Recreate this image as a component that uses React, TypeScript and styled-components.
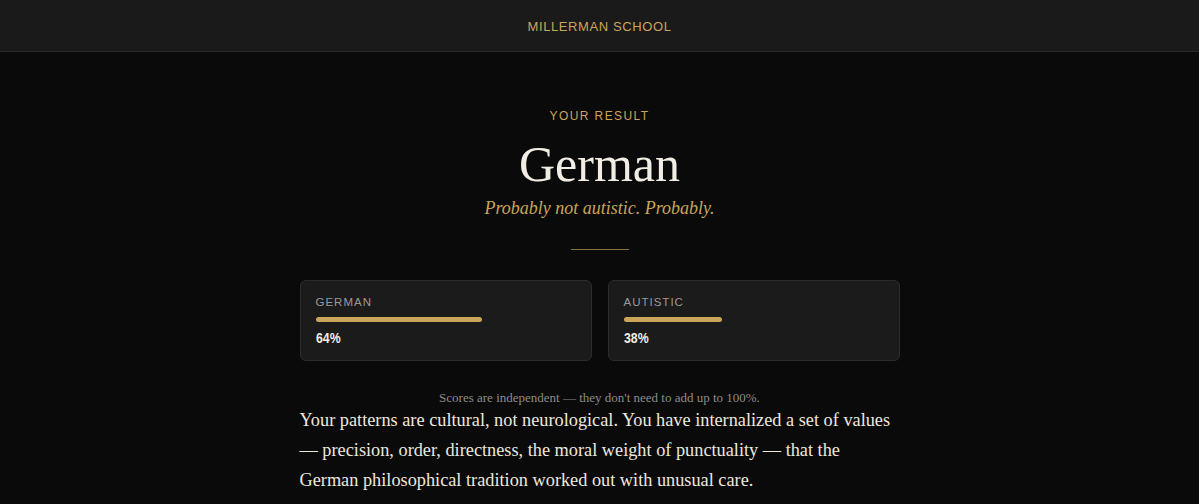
import React from 'react';
import styled, { createGlobalStyle } from 'styled-components';

const GlobalStyle = createGlobalStyle`
  html, body {
    margin: 0;
    padding: 0;
    background: #0a0a0a;
  }
  * {
    box-sizing: border-box;
  }
`;

const gold = '#c9a55a';
const serif = `'Liberation Serif', 'Times New Roman', serif`;
const sans = `'Liberation Sans', Arial, sans-serif`;

type Score = {
  label: string;
  value: number;
};

const scores: Score[] = [
  { label: 'German', value: 64 },
  { label: 'Autistic', value: 38 },
];

const Page = styled.div`
  min-height: 100vh;
  background: #0a0a0a;
  color: #ece8df;
`;

const Header = styled.header`
  height: 52px;
  padding-top: 1px;
  display: flex;
  align-items: center;
  justify-content: center;
  background: #1a1a1a;
  border-bottom: 1px solid #2a2a2a;
`;

const Brand = styled.span`
  font-family: ${sans};
  font-size: 13px;
  letter-spacing: 0.6px;
  color: ${gold};
`;

const Main = styled.main`
  width: 600px;
  margin: 0 auto;
  padding-top: 57px;
  display: flex;
  flex-direction: column;
  align-items: center;
`;

const Eyebrow = styled.div`
  font-family: ${sans};
  font-size: 12px;
  letter-spacing: 1.4px;
  color: ${gold};
  line-height: 14px;
`;

const Title = styled.h1`
  margin: 12px 0 0;
  font-family: ${serif};
  font-weight: 400;
  font-size: 50px;
  line-height: 58px;
  color: #f1ede4;
`;

const Tagline = styled.p`
  margin: 3px 0 0;
  font-family: ${serif};
  font-style: italic;
  font-size: 18px;
  line-height: 24px;
  color: ${gold};
`;

const Divider = styled.hr`
  width: 58px;
  margin: 29px 0 0;
  border: none;
  border-top: 1px solid #8a7240;
`;

const Grid = styled.div`
  width: 100%;
  margin-top: 30px;
  display: grid;
  grid-template-columns: 1fr 1fr;
  gap: 16px;
`;

const Card = styled.div`
  height: 81px;
  padding: 14px 15px 0;
  background: #1b1b1b;
  border: 1px solid #2c2c2c;
  border-radius: 6px;
`;

const CardLabel = styled.div`
  font-family: ${sans};
  font-size: 11.5px;
  line-height: 14px;
  letter-spacing: 1px;
  text-transform: uppercase;
  color: #9a9a9a;
`;

const Track = styled.div`
  margin-top: 8px;
  height: 5px;
  width: 100%;
`;

const Fill = styled.div`
  height: 100%;
  border-radius: 3px;
  background: ${gold};
`;

const Percent = styled.div`
  margin-top: 7px;
  display: inline-block;
  font-family: ${sans};
  font-weight: 700;
  font-size: 15px;
  line-height: 18px;
  color: #f1ede4;
  transform: scaleX(0.82);
  transform-origin: left center;
`;

const Note = styled.p`
  margin: 30px 0 0;
  font-family: ${serif};
  font-size: 13px;
  line-height: 14px;
  color: #8c8c8c;
`;

const Body = styled.p`
  margin: 0;
  width: 100%;
  font-family: ${serif};
  font-size: 18.3px;
  line-height: 30px;
  color: #ece8df;
`;

export default function App() {
  return (
    <Page>
      <GlobalStyle />
      <Header>
        <Brand>MILLERMAN SCHOOL</Brand>
      </Header>
      <Main>
        <Eyebrow>YOUR RESULT</Eyebrow>
        <Title>German</Title>
        <Tagline>Probably not autistic. Probably.</Tagline>
        <Divider />
        <Grid>
          {scores.map((s) => (
            <Card key={s.label}>
              <CardLabel>{s.label}</CardLabel>
              <Track>
                <Fill style={{ width: `${s.value}%` }} />
              </Track>
              <Percent>{s.value}%</Percent>
            </Card>
          ))}
        </Grid>
        <Note>Scores are independent — they don't need to add up to 100%.</Note>
        <Body>
          Your patterns are cultural, not neurological. You have internalized a set of values
          — precision, order, directness, the moral weight of punctuality — that the German
          philosophical tradition worked out with unusual care.
        </Body>
      </Main>
    </Page>
  );
}
